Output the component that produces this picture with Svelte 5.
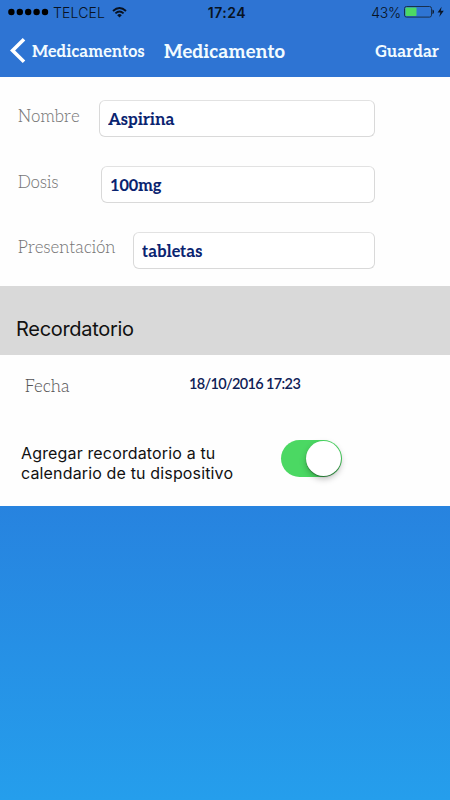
<script lang="ts">
  let calendarReminder = $state(true);

  const fields = $state([
    { id: 'nombre', label: 'Nombre', value: 'Aspirina' },
    { id: 'dosis', label: 'Dosis', value: '100mg' },
    { id: 'presentacion', label: 'Presentación', value: 'tabletas' }
  ]);
</script>

<div class="screen">
  <header>
    <div class="status-bar">
      <div class="carrier">
        <svg class="signal" width="41" height="8" viewBox="0 0 41 8">
          {#each [0, 1, 2, 3, 4] as dot}
            <circle cx={3.4 + dot * 8.4} cy="4" r="3.2" />
          {/each}
        </svg>
        <span class="carrier-name">TELCEL</span>
        <svg class="wifi" width="15" height="11" viewBox="0 0 15 11">
          <path d="M1 4 Q7.5 -1.8 14 4" />
          <path d="M3.4 6.4 Q7.5 2.6 11.6 6.4" />
          <path class="solid" d="M5.2 8.2 Q7.5 6 9.8 8.2 L7.5 10.6 Z" />
        </svg>
      </div>
      <span class="time">17:24</span>
      <div class="power">
        <span class="percent">43%</span>
        <svg width="41" height="12" viewBox="0 0 41 12">
          <rect x="0.5" y="0.5" width="27" height="10.6" rx="2" fill="none" stroke="#18304f" />
          <rect x="1.5" y="1.5" width="11" height="8.6" rx="0.8" fill="#4cd964" />
          <path d="M28.5 3.5 Q30 4 30 5.8 T28.5 8.2 Z" fill="#0a1526" />
          <path d="M37.6 0.8 L33.6 6.6 H36.4 L35.2 11 L39.8 4.8 H36.8 Z" fill="#0a1526" />
        </svg>
      </div>
    </div>

    <nav>
      <button class="back">
        <svg width="16" height="26" viewBox="0 0 16 26">
          <path d="M14 1.3 L2.6 12.5 L14 23.7" />
        </svg>
        <span>Medicamentos</span>
      </button>
      <h1>Medicamento</h1>
      <button class="save">Guardar</button>
    </nav>
  </header>

  <section class="details">
    {#each fields as field}
      <div class="field {field.id}">
        <label for={field.id}>{field.label}</label>
        <input id={field.id} type="text" bind:value={field.value} />
      </div>
    {/each}
  </section>

  <h2>Recordatorio</h2>

  <section class="reminder">
    <div class="date-row">
      <span class="date-label">Fecha</span>
      <span class="date">18/10/2016 17:23</span>
    </div>
    <div class="calendar-row">
      <p>Agregar recordatorio a tu<br />calendario de tu dispositivo</p>
      <button
        class="switch"
        class:on={calendarReminder}
        role="switch"
        aria-checked={calendarReminder}
        aria-label="Agregar recordatorio"
        onclick={() => (calendarReminder = !calendarReminder)}
      >
        <span class="knob"></span>
      </button>
    </div>
  </section>
</div>

<style>
  :global(body) {
    margin: 0;
  }

  .screen {
    display: flex;
    flex-direction: column;
    width: 450px;
    height: 800px;
    overflow: hidden;
    background: linear-gradient(#2e74d4 0, #2783df 506px, #259eec 800px);
    font-family: Inter, 'Liberation Sans', sans-serif;
    color: #111;
  }

  button {
    border: none;
    background: none;
    padding: 0;
    cursor: pointer;
  }

  header {
    height: 77px;
    background: #2e74d3;
  }

  .status-bar {
    display: grid;
    grid-template-columns: 1fr auto 1fr;
    align-items: center;
    height: 24px;
    padding: 0 5px 0 8px;
    color: #081222;
    font-size: 14px;
  }

  .carrier,
  .power {
    display: flex;
    align-items: center;
  }

  .carrier-name {
    margin: 0 7px 0 4px;
    font-weight: 300;
    font-size: 14px;
    letter-spacing: 0.15px;
  }

  .wifi path {
    fill: none;
    stroke: #081222;
    stroke-width: 1.9;
  }

  .wifi path.solid {
    fill: #081222;
    stroke: none;
  }

  .time {
    padding-left: 1px;
    font-weight: 600;
    letter-spacing: 0.5px;
  }

  .power {
    justify-content: flex-end;
    gap: 3px;
  }

  .percent {
    font-size: 14px;
    font-weight: 300;
    letter-spacing: -0.2px;
  }

  nav {
    display: flex;
    align-items: center;
    height: 53px;
    padding: 0 11px 0 10px;
  }

  nav button,
  h1 {
    font-family: Aleo, 'DejaVu Serif Condensed', 'DejaVu Serif', serif;
    font-stretch: condensed;
    font-weight: bold;
    color: #f2fbff;
    white-space: nowrap;
  }

  nav button {
    font-size: 16.3px;
  }

  .back {
    display: flex;
    align-items: center;
    gap: 6px;
    width: 154px;
  }

  .back path {
    fill: none;
    stroke: #fff;
    stroke-width: 3.6;
  }

  .back span,
  .save {
    padding-top: 3px;
  }

  h1 {
    margin: 0;
    padding-top: 3px;
    font-size: 18.7px;
  }

  .save {
    margin-left: auto;
  }

  .details {
    height: 209px;
    box-sizing: border-box;
    padding: 23px 75px 0 18px;
    background: #fefefe;
  }

  .field {
    display: flex;
    height: 37px;
    margin-bottom: 29px;
  }

  label {
    flex: none;
    width: 81px;
    line-height: 35px;
    font-size: 16.8px;
    letter-spacing: 0.2px;
  }

  .dosis label {
    width: 83px;
  }

  .presentacion label {
    width: 115px;
    line-height: 33px;
  }

  label,
  .date-label {
    font-family: Aleo, 'DejaVu Serif Condensed', 'DejaVu Serif', serif;
    font-stretch: condensed;
    font-weight: 300;
    color: #777;
  }

  input {
    flex: 1;
    min-width: 0;
    box-sizing: border-box;
    padding: 2px 8px 0;
    border: 1px solid #d9d9d9;
    border-top-color: #e2e2e2;
    border-radius: 6px;
    background: #fff;
    font: bold 16.4px Aleo, 'DejaVu Serif Condensed', 'DejaVu Serif', serif;
    font-stretch: condensed;
    letter-spacing: -0.1px;
    color: #0a2470;
    outline: none;
  }

  h2 {
    box-sizing: border-box;
    height: 69px;
    margin: 0;
    padding: 31px 16px 0;
    background: #d9d9d9;
    font-size: 20px;
    line-height: 25px;
    font-weight: 400;
    letter-spacing: -0.3px;
  }

  .reminder {
    height: 151px;
    background: #fefefe;
  }

  .date-row {
    display: flex;
    height: 62px;
    padding-left: 25px;
  }

  .date-label {
    width: 164px;
    font-size: 16.8px;
    line-height: 65px;
    letter-spacing: 0.2px;
    color: #555;
  }

  .date {
    font: 600 14.5px/57px Lato, sans-serif;
    letter-spacing: -0.65px;
    color: #0f2156;
  }

  .calendar-row {
    display: flex;
    align-items: flex-start;
    padding: 23px 0 0 21px;
  }

  p {
    width: 260px;
    margin: 3px 0 0;
    font-size: 16px;
    line-height: 20px;
    letter-spacing: 0.15px;
  }

  .switch {
    display: flex;
    box-sizing: border-box;
    width: 61px;
    height: 37px;
    padding: 1px;
    border-radius: 19px;
    background: #e5e5e5;
  }

  .switch.on {
    justify-content: flex-end;
    background: #4bd863;
  }

  .knob {
    width: 35px;
    height: 35px;
    border-radius: 50%;
    background: #fff;
    box-shadow: 0 3px 6px rgba(0, 0, 0, 0.25), 0 1px 1px rgba(0, 0, 0, 0.35);
  }
</style>
